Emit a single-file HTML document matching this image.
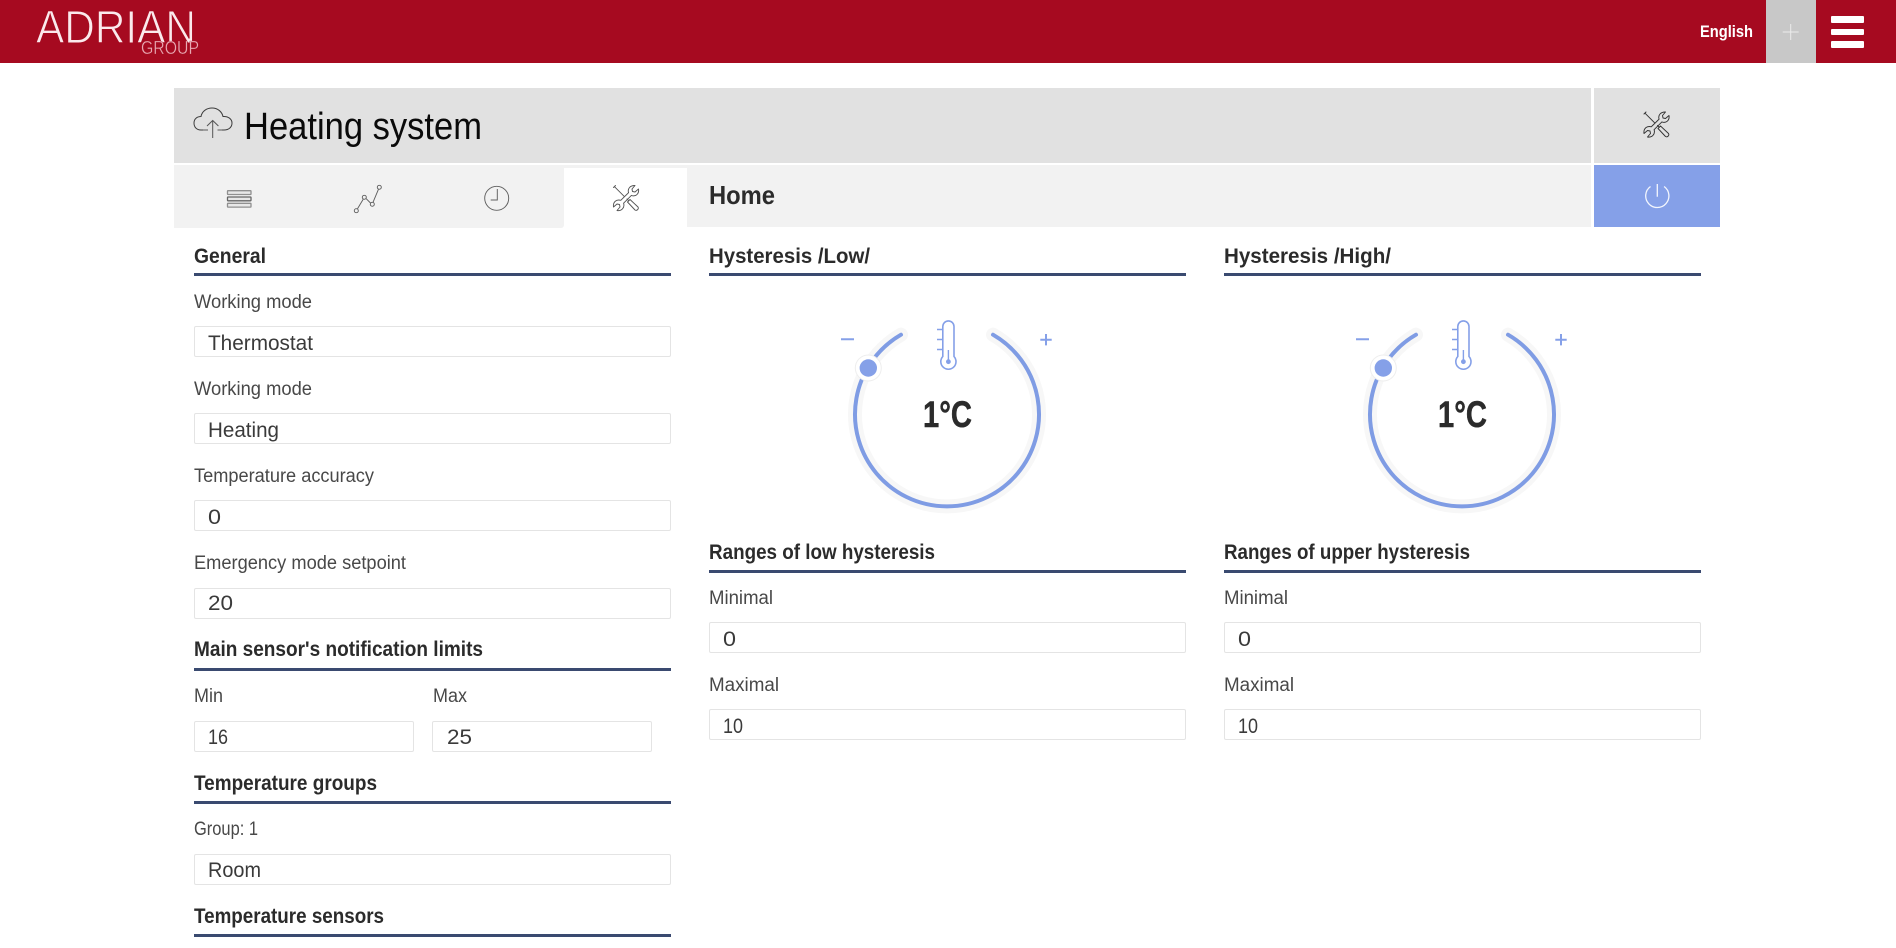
<!DOCTYPE html>
<html lang="en">
<head>
<meta charset="utf-8">
<title>Heating system</title>
<style>
html,body{margin:0;padding:0;width:1896px;height:948px;overflow:hidden;background:#fff}
.b{position:absolute;box-sizing:border-box}
.in{position:absolute;box-sizing:border-box;height:31px;background:#fff;border:1px solid #e4e4e4;border-radius:2px}
.ln{position:absolute;height:3px;background:#3a4a70}
svg{position:absolute;left:0;top:0}
text{font-family:"Liberation Sans",sans-serif}
.h{font-weight:700;font-size:21px;fill:#2b2b2b;transform:translateY(-1px)}
.l{font-size:19px;fill:#484848}
.v{font-size:21.5px;fill:#3a3a3a;transform:translateY(-1px)}
</style>
</head>
<body>
<div class="b" style="left:0;top:0;width:1896px;height:63px;background:#a60a20"></div>
<div class="b" style="left:1766px;top:0;width:50px;height:63px;background:#c8c8c8"></div>
<div class="b" style="left:1831px;top:16px;width:33px;height:7px;background:#fff;border-radius:1px"></div>
<div class="b" style="left:1831px;top:29px;width:33px;height:6px;background:#fff;border-radius:1px"></div>
<div class="b" style="left:1831px;top:41px;width:33px;height:7px;background:#fff;border-radius:1px"></div>

<div class="b" style="left:174px;top:88px;width:1417px;height:75px;background:#e1e1e1"></div>
<div class="b" style="left:1594px;top:88px;width:126px;height:75px;background:#e1e1e1"></div>
<div class="b" style="left:174px;top:165px;width:390px;height:63px;background:#f2f2f2;border-bottom-right-radius:3px"></div>
<div class="b" style="left:564px;top:168px;width:123px;height:60px;background:#fff"></div>
<div class="b" style="left:564px;top:165px;width:123px;height:3px;background:#f2f2f2"></div>
<div class="b" style="left:687px;top:165px;width:904px;height:62px;background:#f2f2f2"></div>
<div class="b" style="left:1594px;top:165px;width:126px;height:62px;background:#85a0e8"></div>

<div class="ln" style="left:194px;top:273px;width:477px"></div>
<div class="ln" style="left:194px;top:668px;width:477px"></div>
<div class="ln" style="left:194px;top:801px;width:477px"></div>
<div class="ln" style="left:194px;top:934px;width:477px"></div>
<div class="ln" style="left:709px;top:273px;width:477px"></div>
<div class="ln" style="left:1224px;top:273px;width:477px"></div>
<div class="ln" style="left:709px;top:570px;width:477px"></div>
<div class="ln" style="left:1224px;top:570px;width:477px"></div>

<div class="in" style="left:194px;top:326px;width:477px"></div>
<div class="in" style="left:194px;top:413px;width:477px"></div>
<div class="in" style="left:194px;top:500px;width:477px"></div>
<div class="in" style="left:194px;top:588px;width:477px"></div>
<div class="in" style="left:194px;top:721px;width:220px"></div>
<div class="in" style="left:432px;top:721px;width:220px"></div>
<div class="in" style="left:194px;top:854px;width:477px"></div>
<div class="in" style="left:709px;top:622px;width:477px"></div>
<div class="in" style="left:709px;top:709px;width:477px"></div>
<div class="in" style="left:1224px;top:622px;width:477px"></div>
<div class="in" style="left:1224px;top:709px;width:477px"></div>

<svg width="1896" height="948" viewBox="0 0 1896 948" xmlns="http://www.w3.org/2000/svg">
<defs>
<g id="tools" fill="none" stroke-width=".95" stroke-linejoin="round" stroke-linecap="round">
  <path d="M8.3 15.8L16.1 8.1C14.8 4.5 17.5 .8 22.5 1L19.5 4.5L20 7L22.5 7.5L26 4.5C26.8 9.5 23 12.5 18.9 10.9L11.1 18.7C12.5 23 9 26.8 4.5 26L7.5 22.5L7 20L4.5 19.5L1 22.5C.3 17.5 4 14.5 8.3 15.8Z"/>
  <path d="M2 2.2L11.500 11.700M14.5 14.5L16.2 16.2M1 3L3 1"/>
  <path d="M15 17.5L17.5 15L25.5 22.5A2.2 2.2 0 0 1 22.5 25.5Z"/>
</g>
<g id="gauge">
  <path d="M993 334.7A92 92 0 1 1 901 334.7" fill="none" stroke="#f7f7f7" stroke-width="14" stroke-linecap="round"/>
  <path d="M993 334.7A92 92 0 1 1 901 334.7" fill="none" stroke="#7f9ce4" stroke-width="4" stroke-linecap="round"/>
  <circle cx="868.3" cy="368" r="13" fill="#fff" stroke="#eeeeee" stroke-width="1"/>
  <circle cx="868.3" cy="368" r="8.7" fill="#85a0e8"/>
  <path d="M841 339.3H854M1046 334V345.400M1040.300 339.7H1051.700" fill="none" stroke="#85a0e8" stroke-width="2"/>
  <path d="M942.800 356.500V326.500A5.600 5.600 0 0 1 954 326.500V356.500A7.600 7.600 0 1 1 942.800 356.500Z" fill="#fff" stroke="#85a0e8" stroke-width="1.600"/>
  <path d="M937 329.500H942.800M937 339.500H942.800M937 349.500H942.800M948.400 350V361" fill="none" stroke="#85a0e8" stroke-width="1.400"/>
  <circle cx="948.400" cy="361.700" r="2.400" fill="#85a0e8"/>
  <text x="923" y="427" font-size="37" font-weight="700" fill="#2b2b2b" stroke="#2b2b2b" stroke-width=".5" textLength="49" lengthAdjust="spacingAndGlyphs">1°C</text>
</g>
</defs>

<!-- logo -->
<text x="36" y="43" font-size="46" fill="#fbe9ec" stroke="#a60a20" stroke-width="1" textLength="160" lengthAdjust="spacingAndGlyphs">ADRIAN</text>
<text x="141" y="54" font-size="18" fill="#e8a8b2" stroke="#a60a20" stroke-width=".3" textLength="58" lengthAdjust="spacingAndGlyphs">GROUP</text>

<text x="1700" y="37" font-size="17" font-weight="700" fill="#fff" textLength="53" lengthAdjust="spacingAndGlyphs">English</text>
<path d="M1790.700 24V40M1782.700 32H1798.700" stroke="#ececec" stroke-width="1" fill="none"/>

<!-- cloud -->
<path d="M203 130H201C196 130 194 126.500 194 123C194 119 197 116.500 201 116.500C202 111 207 108 212 108C218 108 222 112 223 116.500C228 116 232 119 232 123C232 127 229 130 224 130H222" fill="none" stroke="#3c3c3c" stroke-width="1"/>
<path d="M203 130H208M217.500 130H222" fill="none" stroke="#888" stroke-width="1.500"/>
<path d="M212.700 138V120.500M207 126L212.700 120.500L218.400 126" fill="none" stroke="#555" stroke-width="1"/>
<text x="244" y="139" font-size="38" fill="#0a0a0a" textLength="238" lengthAdjust="spacingAndGlyphs">Heating system</text>

<use href="#tools" x="1643" y="111" stroke="#333"/>
<!-- tab icons -->
<g fill="#e8e8e8" stroke="#909090" stroke-width="1.300">
  <rect x="227.500" y="190.700" width="23.500" height="3.800" rx=".5"/>
  <rect x="227.500" y="197" width="23.500" height="3.800" rx=".5" stroke="#666"/>
  <rect x="227.500" y="203.300" width="23.500" height="3.800" rx=".5"/>
</g>
<g fill="none" stroke="#606060" stroke-width=".95">
  <path d="M357.500 208.800L363.200 199.200M366.200 198.700L370.500 203M373 202.300L378.500 189.200"/>
  <circle cx="356.300" cy="210.700" r="2"/><circle cx="364.300" cy="197.300" r="2"/><circle cx="372.300" cy="204.300" r="2"/><circle cx="379.300" cy="187.300" r="2"/>
  <circle cx="496.700" cy="198.300" r="12"/>
  <path d="M497.300 189V200H490.700"/>
</g>
<use href="#tools" x="612.500" y="184.500" stroke="#555"/>

<text x="709" y="204" font-size="26" font-weight="700" fill="#2b2b2b" textLength="66" lengthAdjust="spacingAndGlyphs">Home</text>
<path d="M1650.500 186.500A11.600 11.600 0 1 0 1664.100 186.500M1657.300 184V196.700" fill="none" stroke="#fff" stroke-width="1.300" stroke-opacity=".9"/>

<!-- column 1 -->
<text class="h" x="194" y="264" textLength="72" lengthAdjust="spacingAndGlyphs">General</text>
<text class="l" x="194" y="308" textLength="118" lengthAdjust="spacingAndGlyphs">Working mode</text>
<text class="v" x="208" y="351" textLength="105" lengthAdjust="spacingAndGlyphs">Thermostat</text>
<text class="l" x="194" y="395" textLength="118" lengthAdjust="spacingAndGlyphs">Working mode</text>
<text class="v" x="208" y="438" textLength="71" lengthAdjust="spacingAndGlyphs">Heating</text>
<text class="l" x="194" y="482" textLength="180" lengthAdjust="spacingAndGlyphs">Temperature accuracy</text>
<text class="v" x="208" y="525" textLength="13" lengthAdjust="spacingAndGlyphs">0</text>
<text class="l" x="194" y="569" textLength="212" lengthAdjust="spacingAndGlyphs">Emergency mode setpoint</text>
<text class="v" x="208" y="611" textLength="25" lengthAdjust="spacingAndGlyphs">20</text>
<text class="h" x="194" y="657" textLength="289" lengthAdjust="spacingAndGlyphs">Main sensor's notification limits</text>
<text class="l" x="194" y="702" textLength="29" lengthAdjust="spacingAndGlyphs">Min</text>
<text class="l" x="433" y="702" textLength="34" lengthAdjust="spacingAndGlyphs">Max</text>
<text class="v" x="208" y="745" textLength="20" lengthAdjust="spacingAndGlyphs">16</text>
<text class="v" x="447" y="745" textLength="25" lengthAdjust="spacingAndGlyphs">25</text>
<text class="h" x="194" y="791" textLength="183" lengthAdjust="spacingAndGlyphs">Temperature groups</text>
<text class="l" x="194" y="835" textLength="64" lengthAdjust="spacingAndGlyphs">Group: 1</text>
<text class="v" x="208" y="878" textLength="53" lengthAdjust="spacingAndGlyphs">Room</text>
<text class="h" x="194" y="924" textLength="190" lengthAdjust="spacingAndGlyphs">Temperature sensors</text>

<!-- column 2 -->
<text class="h" x="709" y="264" textLength="161" lengthAdjust="spacingAndGlyphs">Hysteresis /Low/</text>
<use href="#gauge"/>
<text class="h" x="709" y="560" textLength="226" lengthAdjust="spacingAndGlyphs">Ranges of low hysteresis</text>
<text class="l" x="709" y="604" textLength="64" lengthAdjust="spacingAndGlyphs">Minimal</text>
<text class="v" x="723" y="647" textLength="13" lengthAdjust="spacingAndGlyphs">0</text>
<text class="l" x="709" y="691" textLength="70" lengthAdjust="spacingAndGlyphs">Maximal</text>
<text class="v" x="723" y="734" textLength="20" lengthAdjust="spacingAndGlyphs">10</text>

<!-- column 3 -->
<text class="h" x="1224" y="264" textLength="167" lengthAdjust="spacingAndGlyphs">Hysteresis /High/</text>
<use href="#gauge" x="515"/>
<text class="h" x="1224" y="560" textLength="246" lengthAdjust="spacingAndGlyphs">Ranges of upper hysteresis</text>
<text class="l" x="1224" y="604" textLength="64" lengthAdjust="spacingAndGlyphs">Minimal</text>
<text class="v" x="1238" y="647" textLength="13" lengthAdjust="spacingAndGlyphs">0</text>
<text class="l" x="1224" y="691" textLength="70" lengthAdjust="spacingAndGlyphs">Maximal</text>
<text class="v" x="1238" y="734" textLength="20" lengthAdjust="spacingAndGlyphs">10</text>
</svg>
</body>
</html>
